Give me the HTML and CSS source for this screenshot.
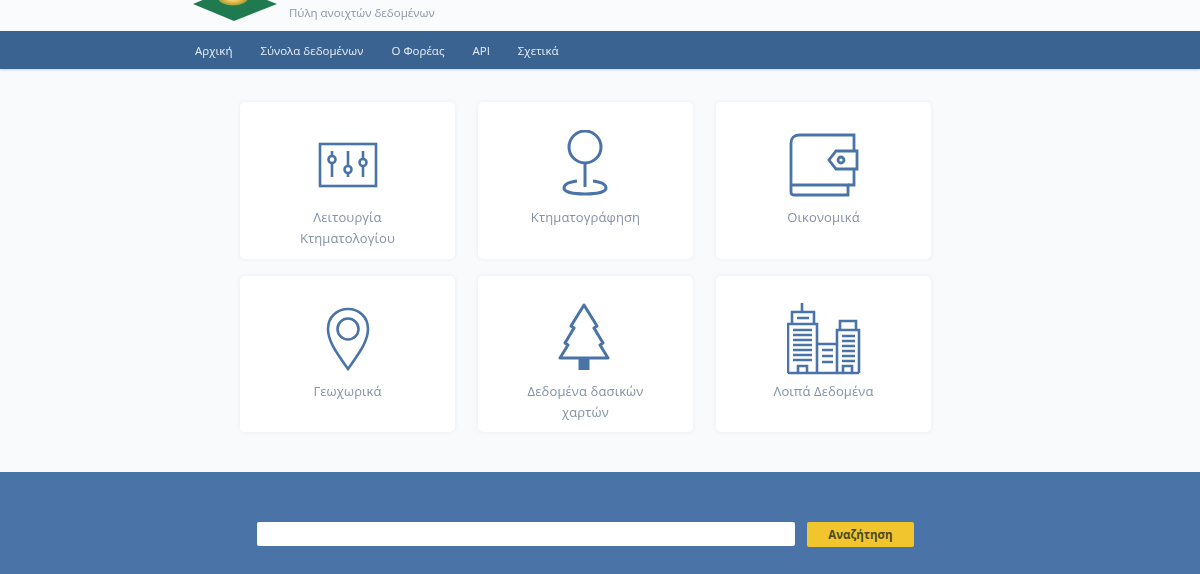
FILE: index.html
```html
<!DOCTYPE html>
<html lang="el">
<head>
    <meta charset="UTF-8">
    <meta name="viewport" content="width=device-width, initial-scale=1.0">
    <title>Πύλη ανοιχτών δεδομένων</title>
    <link rel="stylesheet" href="styles.css">
</head>
<body>
    <header class="top">
        <svg class="logo" width="84" height="31" viewBox="0 0 84 31">
            <defs>
                <radialGradient id="gold" cx="50%" cy="50%" r="50%">
                    <stop offset="0" stop-color="#fdf0b0"/>
                    <stop offset=".6" stop-color="#e3b945"/>
                    <stop offset="1" stop-color="#9a9c3e"/>
                </radialGradient>
            </defs>
            <path d="M41 -13 L84 4 L41 21 L0 4 Z" fill="#1f7a50"/>
            <ellipse cx="40" cy="-2" rx="15" ry="7.500" fill="url(#gold)"/>
        </svg>
        <div class="tagline">Πύλη ανοιχτών δεδομένων</div>
    </header>

    <nav class="nav">
        <a href="#">Αρχική</a>
        <a href="#">Σύνολα δεδομένων</a>
        <a href="#">Ο Φορέας</a>
        <a href="#">API</a>
        <a href="#">Σχετικά</a>
    </nav>

    <main class="cards">
        <a class="card" href="#">
            <div class="icon">
                <svg width="60" height="46" viewBox="0 0 60 46" fill="none" stroke="#4a74a8" stroke-width="2.600">
                    <rect x="2" y="2" width="56" height="42"/>
                    <path d="M14 9V14M14 21V35M30 9V24M30 31V35M45 9V17M45 24V35"/>
                    <circle cx="14" cy="17.500" r="3.500"/>
                    <circle cx="30" cy="27.500" r="3.500"/>
                    <circle cx="45" cy="20.500" r="3.500"/>
                </svg>
            </div>
            <div class="label">Λειτουργία Κτηματολογίου</div>
        </a>
        <a class="card" href="#">
            <div class="icon">
                <svg class="icon-pin" width="46" height="66" viewBox="0 0 46 66" fill="none" stroke="#4a74a8" stroke-width="3">
                    <circle cx="23" cy="17" r="16"/>
                    <path d="M23 33V57"/>
                    <path d="M15 51C7 52 2 54 2 58C2 62 11 64 23 64C35 64 44 62 44 58C44 54 39 52 31 51"/>
                </svg>
            </div>
            <div class="label">Κτηματογράφηση</div>
        </a>
        <a class="card" href="#">
            <div class="icon">
                <svg width="70" height="64" viewBox="0 0 70 64" fill="none" stroke="#4a74a8" stroke-width="2.800">
                    <path d="M65 18V2H10C5 2 2 5 2 10V59C2 61 3 62 5 62H59V52H2"/>
                    <path d="M65 37V52H59"/>
                    <path d="M68 18V36H47L40 27L47 18Z"/>
                    <circle cx="52" cy="27" r="3"/>
                </svg>
            </div>
            <div class="label">Οικονομικά</div>
        </a>
        <a class="card" href="#">
            <div class="icon">
                <svg width="44" height="64" viewBox="0 0 44 64" fill="none" stroke="#4a74a8" stroke-width="2.600">
                    <path d="M22 62C14 50 2 36 2 22C2 10 11 2 22 2C33 2 42 10 42 22C42 36 30 50 22 62Z"/>
                    <circle cx="22" cy="22" r="10.500"/>
                </svg>
            </div>
            <div class="label">Γεωχωρικά</div>
        </a>
        <a class="card" href="#">
            <div class="icon">
                <svg class="icon-tree" width="52" height="68" viewBox="0 0 52 68" fill="none" stroke="#4a74a8" stroke-width="3">
                    <path d="M26 3L39 24L36 26L45 41L42 43L50 56H2L10 43L7 41L16 26L13 24Z" stroke-linejoin="round"/>
                    <path d="M22 57H30V67H22Z" fill="#4a74a8"/>
                </svg>
            </div>
            <div class="label">Δεδομένα δασικών χαρτών</div>
        </a>
        <a class="card" href="#">
            <div class="icon">
                <svg width="74" height="72" viewBox="0 0 74 72" fill="none" stroke="#4a74a8" stroke-width="2.600">
                    <path d="M15 0V9M5 21V9H27V21M1 70V21H30V70M1 70H72M30 41H50M50 70V27H72V70M53 27V18H69V27"/>
                    <path d="M10 15H22M6 27H25M6 32H25M6 37H25M6 42H25M6 47H25M6 52H25M6 57H25M35 47H46M35 53H46M35 59H46M55 33H68M55 38H68M55 43H68M55 48H68M55 53H68M55 58H68"/>
                    <path d="M11 70V63H20V70M56 70V63H65V70"/>
                </svg>
            </div>
            <div class="label">Λοιπά Δεδομένα</div>
        </a>
    </main>

    <footer class="search">
        <input class="search-input" type="text">
        <button class="search-btn">Αναζήτηση</button>
    </footer>
</body>
</html>
```

FILE: styles.css
```css
html, body {
    margin: 0;
    padding: 0;
}
body {
    height: 574px;
    overflow: hidden;
    background-color: #f8fafc;
    font-family: 'Open Sans', sans-serif;
    color: #7f8c9f;
    filter: blur(.5px);
}
a {
    text-decoration: none;
}
.top {
    height: 31px;
    padding-left: 193px;
    display: flex;
    background-color: #f9fbfc;
}
.logo {
    display: block;
}
.tagline {
    margin: 4px 0 0 12px;
    font-size: 11.5px;
    line-height: 17px;
    color: #8b96a6;
}
.nav {
    height: 38px;
    padding-left: 195px;
    display: flex;
    align-items: center;
    gap: 28px;
    background-color: #3b6391;
    box-shadow: 0 1px 2px rgba(120, 150, 190, .4);
}
.nav a {
    color: #e6edf5;
    font-size: 11.5px;
}
.cards {
    width: 691px;
    margin: 33px 0 0 240px;
    display: grid;
    grid-template-columns: repeat(3, 215px);
    grid-template-rows: 157px 156px;
    column-gap: 23px;
    row-gap: 17px;
}
.card {
    display: flex;
    flex-direction: column;
    align-items: center;
    background-color: #fff;
    border-radius: 5px;
    box-shadow: 0 0 4px rgba(120, 140, 170, .12);
    text-align: center;
}
.icon {
    height: 85px;
    display: flex;
    align-items: center;
    justify-content: center;
    margin-top: 20px;
}
.icon-pin {
    margin: 0 2px 4px 0;
}
.icon-tree {
    margin: 0 4px 5px 0;
}
.label {
    width: 150px;
    font-size: 13px;
    line-height: 21px;
    letter-spacing: .12px;
    color: #8592a5;
}
.search {
    position: absolute;
    left: 0;
    right: 0;
    top: 472px;
    height: 102px;
    display: flex;
    align-items: flex-start;
    padding: 50px 0 0 257px;
    box-sizing: border-box;
    gap: 12px;
    background-color: #4a74a8;
}
.search-input {
    width: 538px;
    height: 24px;
    box-sizing: border-box;
    border: 0;
    background-color: #fff;
    border-radius: 2px;
}
.search-btn {
    width: 107px;
    height: 25px;
    border: 0;
    border-radius: 2px;
    background-color: #f0c52e;
    color: #4a4a22;
    font-family: 'Open Sans', sans-serif;
    font-size: 11.5px;
    font-weight: 700;
}
```
